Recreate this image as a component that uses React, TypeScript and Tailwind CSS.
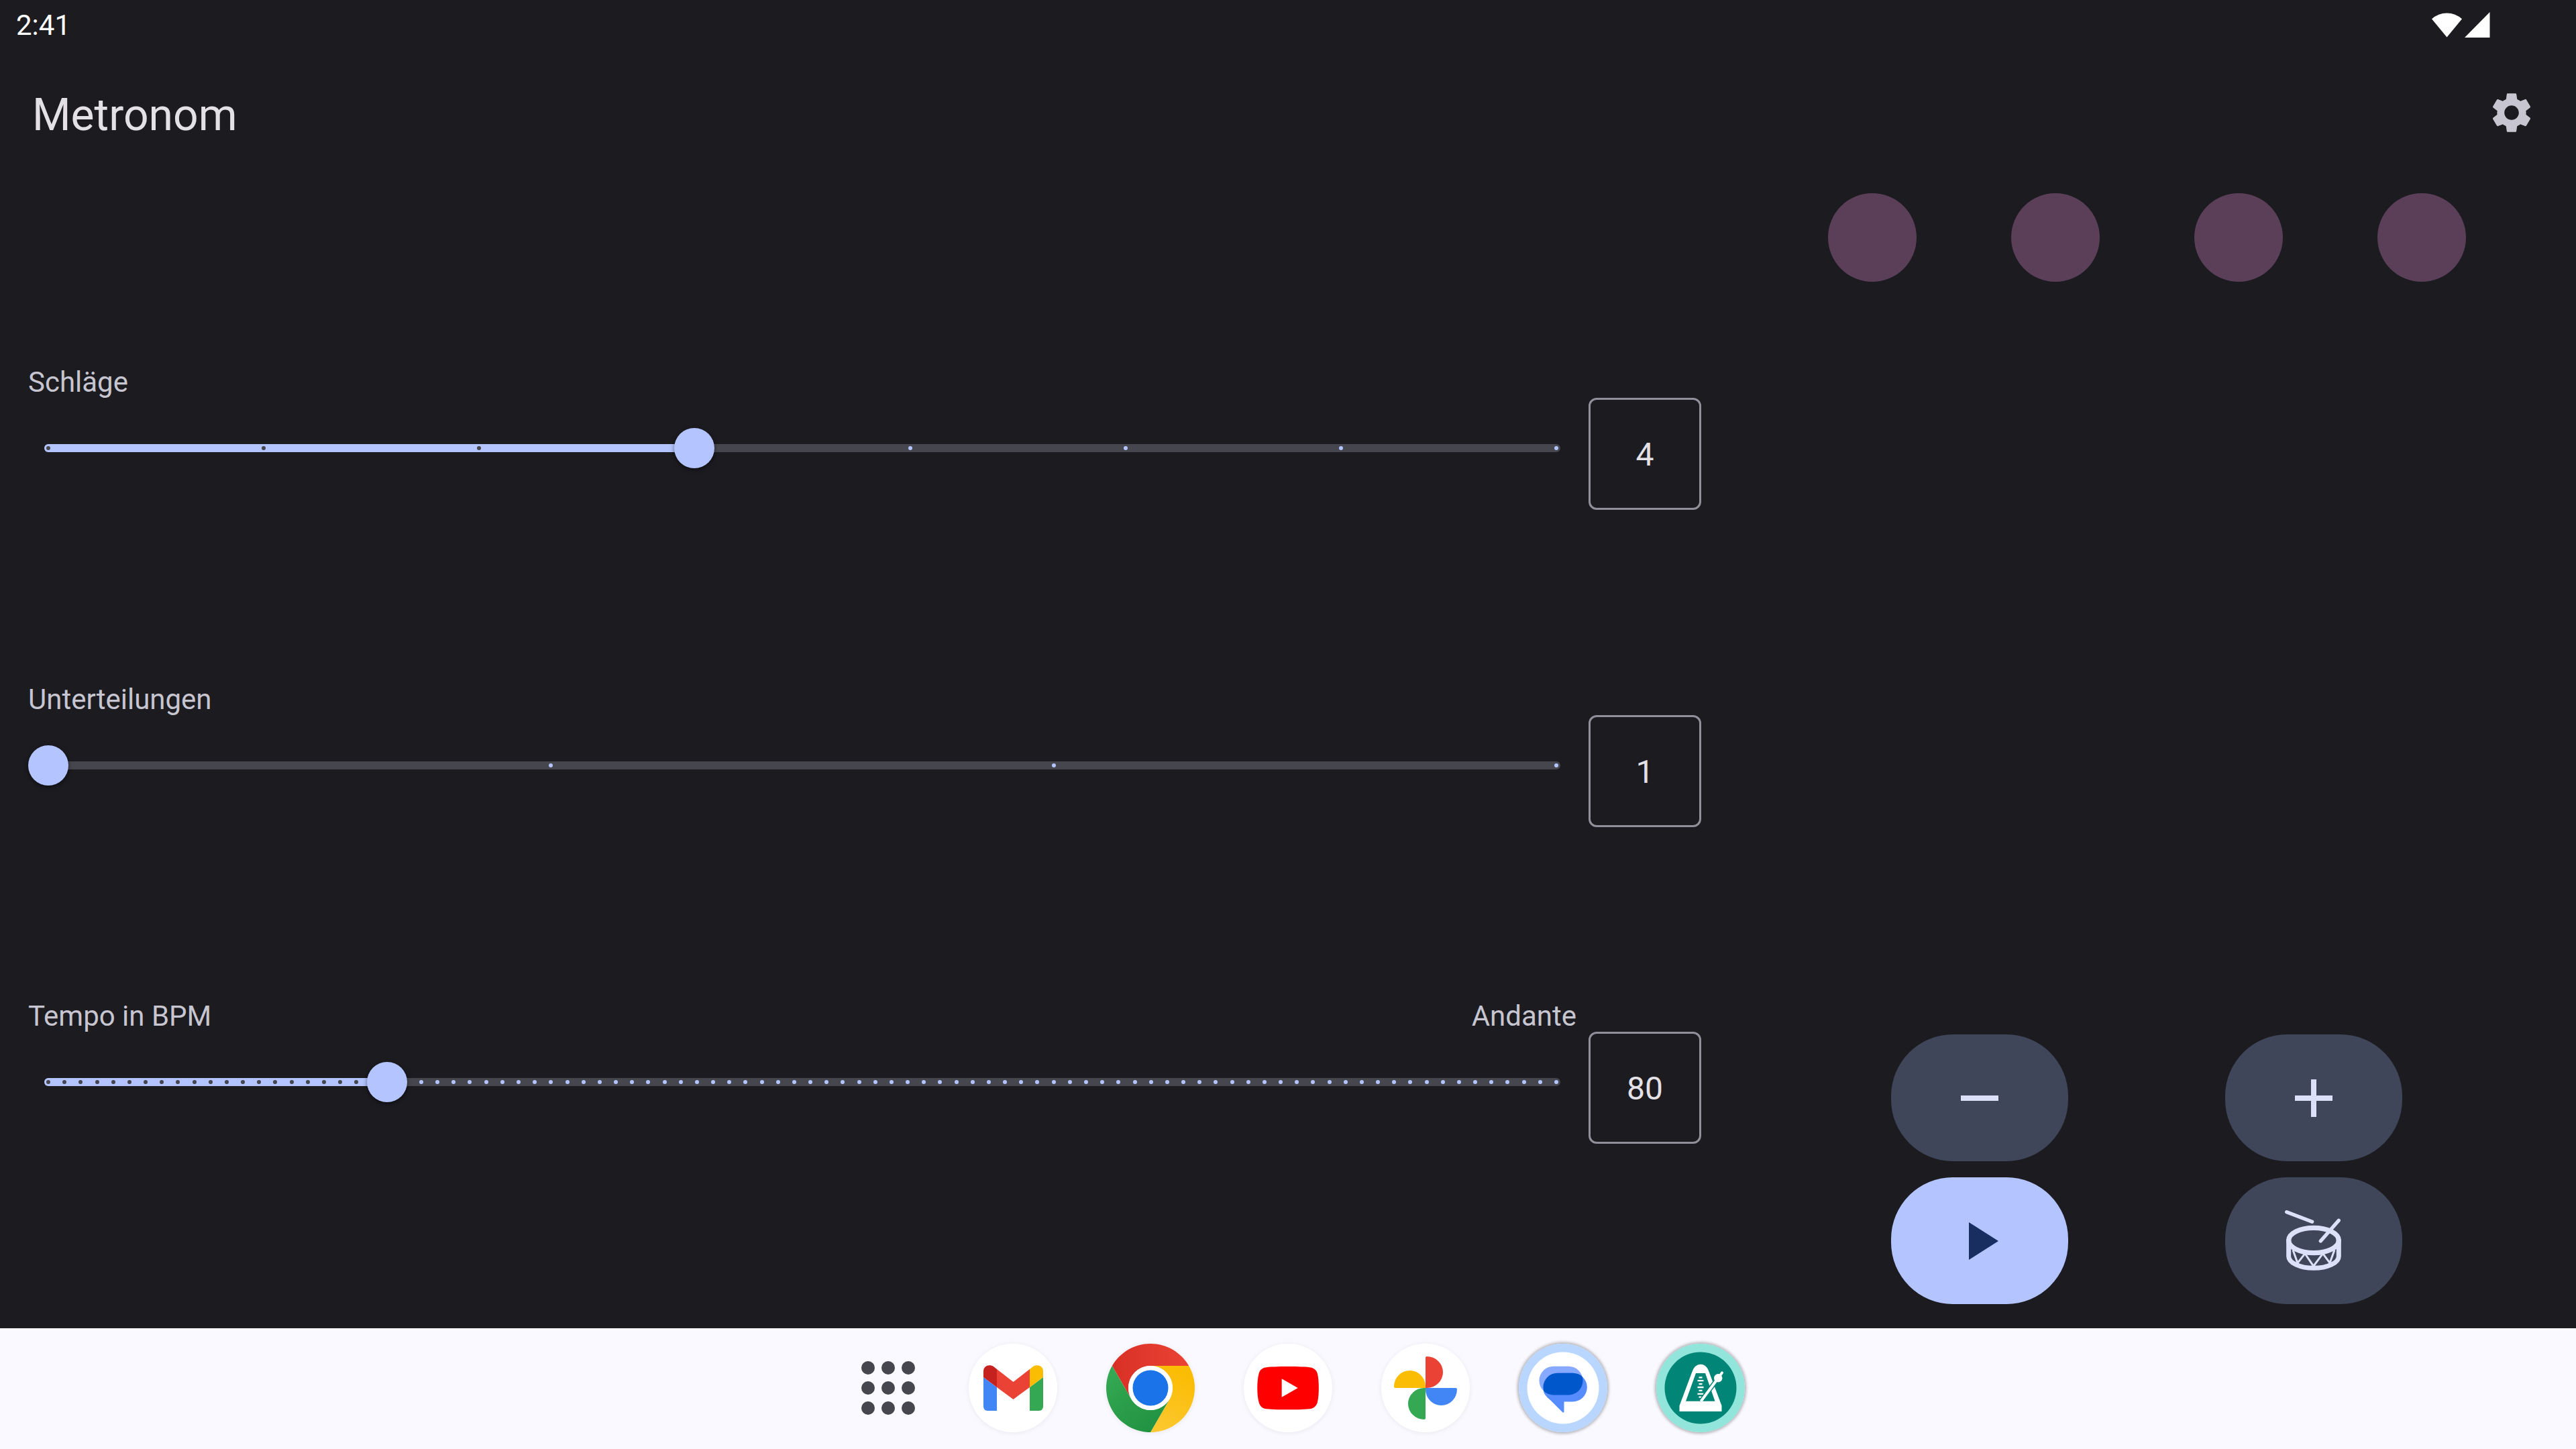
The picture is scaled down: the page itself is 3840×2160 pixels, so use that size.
import React, { useState } from 'react';
import { MdAdd, MdPlayArrow, MdRemove, MdSettings } from 'react-icons/md';

interface SliderRowProps {
  id: string;
  label: string;
  hint?: string;
  min: number;
  max: number;
  ticks: number;
  value: number;
  onChange: (value: number) => void;
}

function SliderRow({ id, label, hint, min, max, ticks, value, onChange }: SliderRowProps) {
  const fraction = (value - min) / (max - min);

  return (
    <div className="flex items-start gap-[18px]">
      <div className="flex-1 min-w-0">
        <div className="flex justify-between text-[42px] leading-[48px] text-[#c6c5d0]">
          <label htmlFor={id}>{label}</label>
          {hint && <span>{hint}</span>}
        </div>
        <div className="grid items-center h-[148px]">
          <div className="[grid-area:1/1] mx-6 h-3 rounded-full bg-[#46464f] overflow-hidden grid items-center">
            <div
              className="[grid-area:1/1] h-3 bg-[#b3c4ff]"
              style={{ width: `calc(6px + (100% - 12px) * ${fraction})` }}
            />
            <div className="[grid-area:1/1] flex justify-between px-[3px]">
              {Array.from({ length: ticks }, (_, i) => (
                <span
                  key={i}
                  className={i / (ticks - 1) <= fraction ? 'size-1.5 rounded-full bg-[#46464f]' : 'size-1.5 rounded-full bg-[#b3c4ff]'}
                />
              ))}
            </div>
          </div>
          <input
            id={id}
            type="range"
            min={min}
            max={max}
            value={value}
            onChange={(e) => onChange(Number(e.target.value))}
            className="[grid-area:1/1] z-10 w-full h-[60px] appearance-none bg-transparent outline-none [&::-webkit-slider-thumb]:appearance-none [&::-webkit-slider-thumb]:size-[60px] [&::-webkit-slider-thumb]:rounded-full [&::-webkit-slider-thumb]:bg-[#b3c4ff] [&::-webkit-slider-thumb]:shadow-[0_2px_6px_rgba(0,0,0,0.5)]"
          />
        </div>
      </div>
      <input
        type="text"
        inputMode="numeric"
        aria-label={label}
        value={value}
        onChange={(e) => onChange(Number(e.target.value) || min)}
        className="mt-[47px] w-[168px] h-[167px] pt-0.5 rounded-xl border-3 border-[#918f9a] bg-transparent text-center text-[48px] text-[#e4e1e6] outline-none"
      />
    </div>
  );
}

function DrumIcon() {
  return (
    <svg viewBox="0 0 288 288" className="size-24" fill="none" stroke="currentColor" strokeLinecap="round">
      <ellipse cx="144" cy="141" rx="112" ry="56" strokeWidth="22" />
      <path d="M32 141v71a112 53 0 0 0 224 0v-71" strokeWidth="21" />
      <path d="M52 187l20 55 33-42 38 56 42-56 31 42 20-55" strokeWidth="9" />
      <path d="M23 14l114 44M256 52l-81 92" strokeWidth="16" />
    </svg>
  );
}

function GmailIcon() {
  return (
    <svg viewBox="0 0 132 132" className="size-full">
      <circle cx="66" cy="66" r="66" fill="#fff" />
      <path d="M22 50l20 15v35H28a6 6 0 0 1-6-6z" fill="#4285f4" />
      <path d="M111 50L91 65v35h14a6 6 0 0 0 6-6z" fill="#34a853" />
      <path d="M22 50v-9c0-8 9-11 15-7l5 4v27z" fill="#c5221f" />
      <path d="M111 50v-9c0-8-9-11-15-7l-5 4v27z" fill="#fbbc04" />
      <path d="M42 38l24.500 19L91 38v27L66.500 83 42 65z" fill="#ea4335" />
    </svg>
  );
}

function ChromeIcon() {
  return (
    <svg viewBox="0 0 132 132" className="size-full">
      <defs>
        <linearGradient id="chrome-red" x1="0" x2="1">
          <stop offset="0" stopColor="#d93025" />
          <stop offset="1" stopColor="#ea4335" />
        </linearGradient>
        <linearGradient id="chrome-green" x1="1" y1="1" x2="0.200" y2="0">
          <stop offset="0" stopColor="#1e8e3e" />
          <stop offset="1" stopColor="#34a853" />
        </linearGradient>
        <linearGradient id="chrome-yellow" x1="0" y1="1" x2="0.300" y2="0">
          <stop offset="0" stopColor="#fcc934" />
          <stop offset="1" stopColor="#fbbc04" />
        </linearGradient>
      </defs>
      <path d="M8.850 33A66 66 0 0 1 123.150 33H66A33 33 0 0 0 37.400 82.500z" fill="url(#chrome-red)" />
      <path d="M123.150 33A66 66 0 0 1 66 132L94.600 82.500A33 33 0 0 0 66 33z" fill="url(#chrome-yellow)" />
      <path d="M8.850 33A66 66 0 0 0 66 132L94.600 82.500A33 33 0 0 1 37.400 82.500z" fill="url(#chrome-green)" />
      <circle cx="66" cy="66" r="33" fill="#fff" />
      <circle cx="66" cy="66" r="26.500" fill="#1a73e8" />
    </svg>
  );
}

function YoutubeIcon() {
  return (
    <svg viewBox="0 0 132 132" className="size-full">
      <circle cx="66" cy="66" r="66" fill="#fff" />
      <path
        d="M32 35.500C42 33.500 90 33.500 100 35.500C105 36.500 109 40 110 45C112.500 55 112.500 77 110 87C109 92 105 96 100 97C90 98.800 42 98.800 32 97C27 96 23.500 92 22.500 87C19.500 77 19.500 55 22.500 45C23.500 40 27 36.500 32 35.500z"
        fill="#f00"
      />
      <path d="M56.700 52.300v27.400L80.700 66z" fill="#fff" />
    </svg>
  );
}

function PhotosIcon() {
  const blade = 'M66 21q0-2 2-2a24 23.500 0 0 1 0 47h-2z';
  return (
    <svg viewBox="0 0 132 132" className="size-full">
      <circle cx="66" cy="66" r="66" fill="#fff" />
      <path d={blade} fill="#ea4335" />
      <path d={blade} fill="#4285f4" transform="rotate(90 66 66)" />
      <path d={blade} fill="#34a853" transform="rotate(180 66 66)" />
      <path d={blade} fill="#fbbc04" transform="rotate(270 66 66)" />
    </svg>
  );
}

function MessagesIcon() {
  return (
    <svg viewBox="0 0 132 132" className="size-full">
      <clipPath id="bubble">
        <rect x="36.500" y="43.700" width="65.300" height="42.700" rx="21.300" />
      </clipPath>
      <circle cx="66" cy="66" r="66" fill="#b8d6ff" />
      <circle cx="66" cy="66" r="53.500" fill="#fff" />
      <rect x="30.500" y="33.700" width="65" height="42.700" rx="21.300" fill="#87a9ff" />
      <rect x="36.500" y="43.700" width="65.300" height="42.700" rx="21.300" fill="#578cff" />
      <path d="M37 70q0 4 4 8l24 24q2.500 2 2.500-1V70z" fill="#578cff" />
      <rect x="30.500" y="33.700" width="65" height="42.700" rx="21.300" fill="#0057cc" clipPath="url(#bubble)" />
    </svg>
  );
}

function MetronomeIcon() {
  return (
    <svg viewBox="0 0 132 132" className="size-full">
      <circle cx="66" cy="66" r="66" fill="#91e5db" />
      <circle cx="66" cy="66" r="53.500" fill="#008577" />
      <path
        d="M34.500 101v-8.500L53 43Q57 30.700 66 30.700T79 43L97.500 92.500V101zM59 44L44 85.700h43.500L73 44z"
        fill="#fff"
        fillRule="evenodd"
      />
      <path
        d="M63.500 50.300h5M61.500 55.200h9M63.500 60.100h5M61.500 65h9M63.500 69.900h5M61.500 74.800h9M63.500 79.700h5"
        stroke="#fff"
        strokeWidth="2.300"
      />
      <path d="M69 82.300L92.200 51.300" stroke="#008577" strokeWidth="7" />
      <path d="M66.500 86L92.200 51.300" stroke="#fff" strokeWidth="4" />
      <path d="M92.200 51.300l5.800-8" stroke="#fff" strokeWidth="4" strokeLinecap="round" />
      <circle cx="92.200" cy="51.300" r="6.200" fill="#fff" />
    </svg>
  );
}

const dockApps = [
  { name: 'Gmail', Icon: GmailIcon, open: false },
  { name: 'Chrome', Icon: ChromeIcon, open: false },
  { name: 'YouTube', Icon: YoutubeIcon, open: false },
  { name: 'Fotos', Icon: PhotosIcon, open: false },
  { name: 'Messages', Icon: MessagesIcon, open: true },
  { name: 'Metronom', Icon: MetronomeIcon, open: true },
];

function Dock() {
  return (
    <nav className="h-[180px] flex items-center justify-center gap-[73px] pb-0.5 bg-[#faf9ff]">
      <button type="button" aria-label="Alle Apps" className="w-[132px] flex justify-end pr-[7px]">
        <span className="grid grid-cols-3 gap-2.5">
          {Array.from({ length: 9 }, (_, i) => (
            <span key={i} className="size-5 rounded-full bg-[#46464f]" />
          ))}
        </span>
      </button>
      {dockApps.map(({ name, Icon, open }) => (
        <button
          key={name}
          type="button"
          aria-label={name}
          className={open
            ? 'size-[132px] rounded-full shadow-[0_0_4px_2px_rgba(0,0,0,0.3)]'
            : 'size-[132px] rounded-full shadow-[0_1px_6px_1px_rgba(0,0,0,0.06)]'}
        >
          <Icon />
        </button>
      ))}
    </nav>
  );
}

export default function App() {
  const [beats, setBeats] = useState(4);
  const [subdivisions, setSubdivisions] = useState(1);
  const [tempo, setTempo] = useState(80);

  const tonal = 'w-[264px] h-[189px] rounded-[92px] flex items-center justify-center bg-[#404659] text-[#dce1f9]';

  return (
    <div className="min-h-screen flex flex-col bg-[#1b1b20] font-['Roboto',sans-serif]">
      <div className="h-[72px] flex items-center justify-between pl-6 pr-32 pt-0.5 text-[42px] text-white">
        <span>2:41</span>
        <svg viewBox="0 0 87 38" className="w-[87px] h-[38px]" fill="currentColor">
          <path d="M0 10.300A33 33 0 0 1 45 10.300L22.500 37.500z" />
          <path d="M86.500 0v38H49z" />
        </svg>
      </div>

      <header className="h-48 flex items-center justify-between pl-12 pr-15">
        <h1 className="pt-2 text-[66px] leading-[84px] text-[#e4e1e6]">Metronom</h1>
        <button type="button" aria-label="Einstellungen" className="text-[#c6c5d0]">
          <MdSettings className="size-18" />
        </button>
      </header>

      <main className="flex-1 grid grid-cols-3">
        <section className="col-span-2 flex flex-col justify-between gap-12 pl-[42px] pr-6 pt-[282px] pb-[275px]">
          <SliderRow id="beats" label="Schläge" min={1} max={8} ticks={8} value={beats} onChange={setBeats} />
          <SliderRow
            id="subdivisions"
            label="Unterteilungen"
            min={1}
            max={4}
            ticks={4}
            value={subdivisions}
            onChange={setSubdivisions}
          />
          <SliderRow
            id="tempo"
            label="Tempo in BPM"
            hint="Andante"
            min={40}
            max={218}
            ticks={94}
            value={tempo}
            onChange={setTempo}
          />
        </section>

        <section className="flex flex-col justify-between pt-6 pb-9">
          <div className="flex justify-around px-[94px]">
            {Array.from({ length: beats }, (_, i) => (
              <span key={i} className="size-[132px] rounded-full bg-[#5b3f59]" />
            ))}
          </div>
          <div className="grid grid-cols-2 justify-items-center gap-y-6 px-[142px]">
            <button type="button" aria-label="Langsamer" className={tonal} onClick={() => setTempo(tempo - 1)}>
              <MdRemove className="size-24" />
            </button>
            <button type="button" aria-label="Schneller" className={tonal} onClick={() => setTempo(tempo + 1)}>
              <MdAdd className="size-24" />
            </button>
            <button
              type="button"
              aria-label="Start"
              className="w-[264px] h-[189px] rounded-[92px] flex items-center justify-center bg-[#b3c4ff] text-[#182e60]"
            >
              <MdPlayArrow className="size-24" />
            </button>
            <button type="button" aria-label="Tempo tippen" className={tonal}>
              <DrumIcon />
            </button>
          </div>
        </section>
      </main>

      <Dock />
    </div>
  );
}
